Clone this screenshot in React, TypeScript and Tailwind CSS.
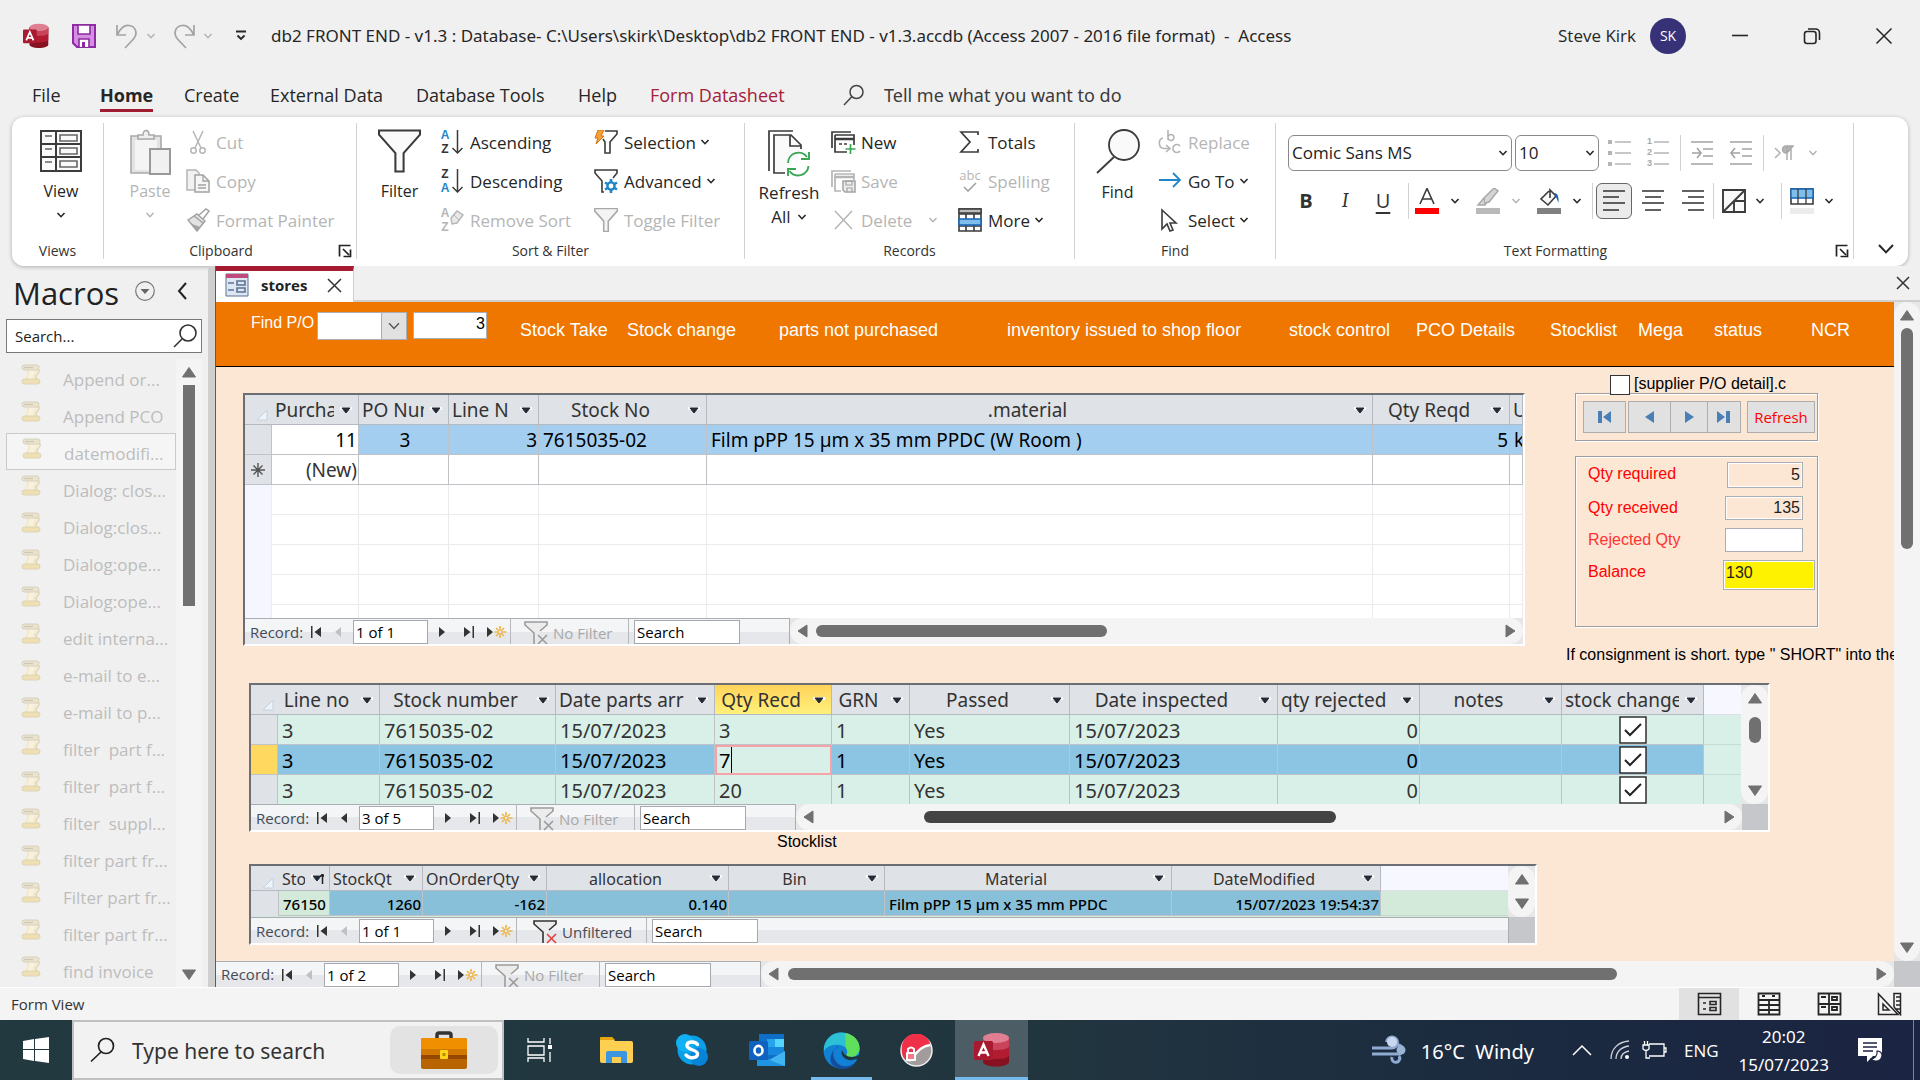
import React from "react";

type Kids = { children?: React.ReactNode };

function Ico({ w = 24, h = 24, vb, children, cls = "" }: Kids & { w?: number; h?: number; vb?: string; cls?: string }) {
  return (
    <svg width={w} height={h} viewBox={vb ?? `0 0 ${w} ${h}`} fill="none" className={`shrink-0 ${cls}`} aria-hidden="true">
      {children}
    </svg>
  );
}

function Chevron({ color = "#262626", w = 10 }: { color?: string; w?: number }) {
  return (
    <Ico w={w} h={w} vb="0 0 10 10">
      <path d="M1.500 3l3.500 3.700L8.500 3" stroke={color} strokeWidth={w > 12 ? 1 : 1.600} />
    </Ico>
  );
}

const DARK = "#3b3b3b";
const PALE = "#b5b5b5";

/* ---------- title bar ---------- */

function AccessLogo({ size = 26 }: { size?: number }) {
  return (
    <Ico w={size} h={size} vb="0 0 36 36">
      <path d="M9 6v24c0 2.600 6 4.500 13 4.500S35 32.600 35 30V6z" fill="#871121" />
      <path d="M9 6v17c0 2.600 6 4 13 4s13-1.400 13-4V6z" fill="#b21c30" />
      <path d="M9 6v8c0 2.600 6 4 13 4s13-1.400 13-4V6z" fill="#c9435a" />
      <ellipse cx="22" cy="6" rx="13" ry="5" fill="#df7f91" />
      <rect x="0" y="9" width="19" height="19" rx="1.500" fill="#a81a30" />
      <path d="M4.500 24L9.500 12.500L14.500 24M6.300 20.500H12.700" stroke="#fff" strokeWidth="2.400" />
    </Ico>
  );
}

function TitleBar() {
  return (
    <header className="flex h-[72px] items-center pl-[23px] text-[17px] text-[#262626]">
      <AccessLogo />
      <button aria-label="Save" className="ml-[22px]">
        <Ico w={26} h={26}>
          <path d="M2 2h22v22H6l-4-4z" fill="#d48fe0" stroke="#8e2aa3" strokeWidth="2" />
          <path d="M7 2h12v9H7z" fill="#fff" stroke="#8e2aa3" strokeWidth="1.600" />
          <path d="M8 24v-8h10v8" fill="#fff" stroke="#8e2aa3" strokeWidth="1.600" />
          <path d="M11 19h3v5h-3z" fill="#8e2aa3" />
        </Ico>
      </button>
      <button aria-label="Undo" className="ml-[18px]">
        <Ico w={24} h={26}>
          <path d="M2 2v10h9M2.500 11.500C6 4 10 2 14 2.500c7 .8 9 8 4.500 13.500L10 25" stroke="#a3a3a3" strokeWidth="1.700" />
        </Ico>
      </button>
      <span className="ml-[7px]"><Chevron color="#b5b5b5" /></span>
      <button aria-label="Redo" className="ml-4">
        <Ico w={24} h={26}>
          <path d="M22 2v10h-9M21.500 11.500C18 4 14 2 10 2.500c-7 .8-9 8-4.500 13.500L14 25" stroke="#a3a3a3" strokeWidth="1.700" />
        </Ico>
      </button>
      <span className="ml-[7px]"><Chevron color="#b5b5b5" /></span>
      <button aria-label="Customize Quick Access Toolbar" className="ml-[22px]">
        <Ico w={12} h={12}>
          <path d="M1 1.500h10M2.500 5.500L6 9l3.500-3.500" stroke="#262626" strokeWidth="1.800" />
        </Ico>
      </button>
      <h1 className="ml-6 font-['Segoe_UI','Noto_Sans',sans-serif] whitespace-pre">{"db2 FRONT END - v1.3 : Database- C:\\Users\\skirk\\Desktop\\db2 FRONT END - v1.3.accdb (Access 2007 - 2016 file format)  -  Access"}</h1>
      <div className="ml-auto flex items-center">
        <span className="text-[17px]">Steve Kirk</span>
        <span className="ml-[14px] flex h-9 w-9 items-center justify-center rounded-full bg-[#373277] text-sm text-white">SK</span>
        <button aria-label="Minimize" className="ml-[45px]">
          <Ico w={18} h={18}><path d="M1 8.500h16" stroke="#262626" strokeWidth="1.600" /></Ico>
        </button>
        <button aria-label="Restore" className="ml-[54px]">
          <Ico w={18} h={18}>
            <rect x="1.500" y="4.500" width="11.500" height="12" rx="2.500" stroke="#262626" strokeWidth="1.600" />
            <path d="M5 2h7.500a4 4 0 0 1 4 4v7" stroke="#262626" strokeWidth="1.600" />
          </Ico>
        </button>
        <button aria-label="Close" className="mr-[27px] ml-[54px]">
          <Ico w={18} h={18}><path d="M1.500 1.500l15 15M16.500 1.500l-15 15" stroke="#262626" strokeWidth="1.500" /></Ico>
        </button>
      </div>
    </header>
  );
}

const menu = [
  ["File", "w-[68px]"],
  ["Home", "w-[84px]"],
  ["Create", "w-[86px]"],
  ["External Data", "w-[146px]"],
  ["Database Tools", "w-[162px]"],
  ["Help", "w-[72px]"],
  ["Form Datasheet", "w-[193px]"],
];

function MenuRow() {
  return (
    <nav className="flex h-[45px] items-center pt-[2px] pl-8 text-lg text-[#262626]">
      {menu.map(([name, w]) => (
        <div key={name} className={`${w} shrink-0`}>
          <button
            className={
              name === "Home"
                ? "border-b-[3px] border-[#a01c30] pt-[3px] leading-[28px] font-bold"
                : name === "Form Datasheet"
                  ? "leading-[30px] text-[#a4203a]"
                  : "leading-[30px]"
            }
          >
            {name}
          </button>
        </div>
      ))}
      <Ico w={22} h={22}>
        <circle cx="13.500" cy="8" r="6.500" stroke="#444" strokeWidth="1.500" />
        <path d="M9 12.500L1 21" stroke="#444" strokeWidth="1.500" />
      </Ico>
      <input
        aria-label="Tell me what you want to do"
        placeholder="Tell me what you want to do"
        className="ml-[19px] w-80 bg-transparent font-['Segoe_UI','Noto_Sans',sans-serif] outline-none placeholder:text-[#3b3b3b]"
      />
    </nav>
  );
}

/* ---------- ribbon ---------- */

function Group({ label, w, launcher, children }: Kids & { label: string; w: string; launcher?: boolean }) {
  return (
    <section aria-label={label} className={`flex shrink-0 flex-col justify-between border-r border-[#d2d2d2] ${w}`}>
      <div className="flex h-[118px]">{children}</div>
      <div className="flex h-4 items-center">
        <span className="grow text-center text-sm leading-4 text-[#333]">{label}</span>
        {launcher && (
          <button aria-label={`${label} options`} className="mr-1">
            <Ico w={14} h={14}>
              <path d="M1.500 12.500V1.500H12.500M5 5l6 6M12.500 5.500v7h-7" stroke="#222" strokeWidth="1.700" />
            </Ico>
          </button>
        )}
      </div>
    </section>
  );
}

function Big({ icon, lines, w, off, drop }: { icon: React.ReactNode; lines: string; w: string; off?: boolean; drop?: boolean }) {
  return (
    <button className={`flex shrink-0 flex-col items-center pt-[6px] text-base ${w} ${off ? "text-[#b5b5b5]" : "text-[#262626]"}`}>
      {icon}
      <span className="mt-[6px] leading-6">{lines}</span>
      {drop && <span className="mt-[7px]"><Chevron color={off ? PALE : "#262626"} /></span>}
    </button>
  );
}

function Small({ icon, text, off, drop, wide }: { icon: React.ReactNode; text: string; off?: boolean; drop?: boolean; wide?: boolean }) {
  return (
    <button className={`flex h-[39px] items-center text-[17px] whitespace-nowrap ${off ? "text-[#b5b5b5]" : "text-[#262626]"}`}>
      <span className="flex w-[30px] shrink-0 items-center">{icon}</span>
      {text}
      {drop && <span className={wide ? "ml-4" : "ml-1"}><Chevron color={off ? PALE : "#262626"} /></span>}
    </button>
  );
}

function AZ({ top, bottom, mono, erase }: { top: string; bottom: string; mono?: boolean; erase?: boolean }) {
  const blue = "#1f86c9";
  const c = (s: string) => (mono ? PALE : s === "A" ? blue : "#333");
  return (
    <span className="flex items-center">
      <span className="flex w-[10px] flex-col items-center font-['Liberation_Sans',sans-serif] text-[12px] leading-[14px] font-bold">
        <span style={{ color: c(top) }}>{top}</span>
        <span style={{ color: c(bottom) }}>{bottom}</span>
      </span>
      {erase ? (
        <Ico w={14} h={24}><path d="M1 10l6-7 6 4-6 8-5 1z" fill="#e8e8e8" stroke={PALE} strokeWidth="1.400" /><path d="M4 7l5 5" stroke={PALE} /></Ico>
      ) : (
        <Ico w={14} h={24}><path d="M7.500 0v23M2.500 18l5 5 5-5" stroke={DARK} strokeWidth="1.500" /></Ico>
      )}
    </span>
  );
}

function Funnel({ w, h, color = DARK, fill = "#fafafa" }: { w: number; h: number; color?: string; fill?: string }) {
  return (
    <Ico w={w} h={h} vb="0 0 42 42">
      <path d="M1 1h40v4L25 23v18h-8V23L1 5z" fill={fill} stroke={color} strokeWidth={w > 30 ? 2 : 2.800} />
    </Ico>
  );
}

function Sep() {
  return <span className="h-9 w-px shrink-0 bg-[#d2d2d2]" />;
}

function Lines({ rows, color = DARK }: { rows: number[][]; color?: string }) {
  return (
    <Ico w={24} h={24}>
      {rows.map(([x, x2, y], i) => <path key={i} d={`M${x} ${y}H${x2}`} stroke={color} strokeWidth="1.600" />)}
    </Ico>
  );
}

function Swatch({ color, children }: Kids & { color: string }) {
  return (
    <Ico w={24} h={26}>
      {children}
      <path d="M0 20h24v6H0z" fill={color} />
    </Ico>
  );
}

function FakeSelect({ label, value, w }: { label: string; value: string; w: string }) {
  return (
    <div className={`flex h-9 shrink-0 items-center rounded-md border border-[#8a8a8a] bg-white pr-[3px] ${w}`}>
      <select aria-label={label} className="w-full grow appearance-none bg-transparent pl-[3px] text-[17px] text-[#222] outline-none">
        <option>{value}</option>
      </select>
      <Chevron />
    </div>
  );
}

function Ribbon() {
  const cutIcon = (
    <Ico w={24} h={24}>
      <path d="M7 1l8 17M17 1L9 18" stroke={PALE} strokeWidth="1.500" />
      <circle cx="7.500" cy="20.500" r="2.700" stroke={PALE} strokeWidth="1.500" />
      <circle cx="16.500" cy="20.500" r="2.700" stroke={PALE} strokeWidth="1.500" />
    </Ico>
  );
  return (
    <div className="mx-3 flex h-[150px] rounded-xl bg-white pt-[6px] pb-[7px] shadow-[0_1px_4px_rgba(0,0,0,0.28)]">
      <Group label="Views" w="w-[92px]">
        <Big
          w="w-[92px] pl-[6px]"
          lines="View"
          drop
          icon={
            <Ico w={44} h={44}>
              <path d="M2 2h40v40H2zM2 15h40M2 28h40M17 2v40" fill="#fafafa" stroke={DARK} strokeWidth="2" />
              <path d="M6 7h7M6 20h7M6 33h7M21 6h17v6H21zM21 19h17v6H21zM21 32h17v6H21z" stroke="#666" strokeWidth="1.600" />
            </Ico>
          }
        />
      </Group>

      <Group label="Clipboard" w="w-[253px]" launcher>
        <Big
          w="w-[82px] pl-[10px]"
          lines="Paste"
          off
          drop
          icon={
            <Ico w={44} h={46} cls="-mb-[2px]">
              <path d="M3 7h30v37H3z" fill="#e3e3e3" stroke="#a9a9a9" strokeWidth="1.600" />
              <path d="M7 11h22v30H7z" fill="#f4f4f4" />
              <path d="M10 10V6h5c0-6 6-6 6 0h5v4z" fill="#eee" stroke="#a9a9a9" strokeWidth="1.600" />
              <path d="M22 20h20v25H22z" fill="#f1f1f1" stroke="#999" strokeWidth="2" />
            </Ico>
          }
        />
        <div>
          <Small off text="Cut" icon={cutIcon} />
          <Small
            off
            text="Copy"
            icon={
              <Ico w={24} h={24}>
                <path d="M1 1h9l3 3v17H1z" fill="#f1f1f1" stroke={PALE} strokeWidth="1.500" />
                <path d="M9 6h8l6 6v11H9z" fill="#f6f6f6" stroke="#a3a3a3" strokeWidth="1.500" />
                <path d="M17 6v6h6M12 16h8M12 19h8" stroke="#a3a3a3" strokeWidth="1.300" />
              </Ico>
            }
          />
          <Small
            off
            text="Format Painter"
            icon={
              <Ico w={24} h={24}>
                <path d="M2 12l9-6 8 7-8 10z" fill="#e3e3e3" stroke="#a3a3a3" strokeWidth="1.500" />
                <path d="M8 8l9 7M13 7l7-6 3 2-6 8" stroke="#a3a3a3" strokeWidth="1.500" />
                <path d="M4 15l10 4-3 4z" fill="#a3a3a3" />
              </Ico>
            }
          />
        </div>
      </Group>

      <Group label="Sort & Filter" w="w-[388px]">
        <Big w="w-[83px] pl-[2px]" lines="Filter" icon={<Funnel w={43} h={44} />} />
        <div className="w-[154px]">
          <Small text="Ascending" icon={<AZ top="A" bottom="Z" />} />
          <Small text="Descending" icon={<AZ top="Z" bottom="A" />} />
          <Small off text="Remove Sort" icon={<AZ top="A" bottom="Z" mono erase />} />
        </div>
        <div>
          <Small
            drop
            text="Selection"
            icon={
              <Ico w={24} h={24}>
                <path d="M11 1h12v3l-7 8v11h-5V12L9 9" stroke={DARK} strokeWidth="1.600" />
                <path d="M4 0h6L7 6h3L2 14l2-6H1z" fill="#f7a13b" stroke="#d9720c" strokeWidth="1" />
              </Ico>
            }
          />
          <Small
            drop
            text="Advanced"
            icon={
              <Ico w={24} h={24}>
                <path d="M10 23H8V12L1 4V1h22v3l-4 5" stroke={DARK} strokeWidth="1.600" />
                <circle cx="17" cy="17" r="3.600" stroke="#1f86c9" strokeWidth="2.400" />
                <path d="M17 10v3M17 21v3M11 13.500l2.500 1.500M20.500 19l2.500 1.500M11 20.500l2.500-1.500M20.500 15l2.500-1.500" stroke="#1f86c9" strokeWidth="2.600" />
              </Ico>
            }
          />
          <Small off text="Toggle Filter" icon={<Funnel w={24} h={24} color="#a9a9a9" fill="#f4f4f4" />} />
        </div>
      </Group>

      <Group label="Records" w="w-[330px]">
        <button className="flex w-[86px] shrink-0 flex-col items-center pt-[6px] pl-[2px] text-[17px] text-[#262626]">
          <Ico w={44} h={48}>
            <path d="M2 42V2h24" stroke={DARK} strokeWidth="1.700" />
            <path d="M18 44H7V6h17l10 10v4" fill="#fafafa" stroke={DARK} strokeWidth="1.700" />
            <path d="M23 6v11h11" stroke={DARK} strokeWidth="1.700" />
            <path d="M21 34a10.500 10.500 0 0 1 19-6M41.500 37a10.500 10.500 0 0 1-19 5M42 23v7h-8M21 47v-7h8" stroke="#3aa655" strokeWidth="1.900" />
          </Ico>
          <span className="mt-1 leading-6">Refresh</span>
          <span className="flex items-center gap-[6px] leading-6">All <Chevron /></span>
        </button>
        <div className="w-[127px]">
          <Small
            text="New"
            icon={
              <Ico w={25} h={24}>
                <path d="M1 18V2h19M4 5h19v10M4 5v17h12" stroke={DARK} strokeWidth="1.700" />
                <path d="M4 9h19" stroke={DARK} strokeWidth="2.500" />
                <path d="M8 14h3M13 14h3" stroke={DARK} strokeWidth="1.400" />
                <path d="M19.500 14v10M14.500 19h10" stroke="#3aa655" strokeWidth="1.700" />
              </Ico>
            }
          />
          <Small
            off
            text="Save"
            icon={
              <Ico w={25} h={24}>
                <path d="M1 18V2h19M4 5h19v6M4 5v17h6" stroke={PALE} strokeWidth="1.700" />
                <path d="M4 8h19" stroke={PALE} strokeWidth="2.500" />
                <path d="M12 12h12v11H14l-2-2z" fill="#ececec" stroke="#a3a3a3" strokeWidth="1.500" />
                <path d="M15 12h6v4h-6zM16 23v-4h5v4" stroke="#a3a3a3" strokeWidth="1.200" />
              </Ico>
            }
          />
          <Small off drop wide text="Delete" icon={<Ico w={24} h={24}><path d="M4 3l17 18M21 3L4 21" stroke={PALE} strokeWidth="1.500" /></Ico>} />
        </div>
        <div>
          <Small text="Totals" icon={<Ico w={24} h={24}><path d="M20 5V2H3l9 10-9 10h17v-3" stroke={DARK} strokeWidth="1.700" /></Ico>} />
          <Small
            off
            text="Spelling"
            icon={
              <span className="flex w-6 flex-col items-center text-[13px] leading-[11px]">
                abc
                <Ico w={14} h={12}><path d="M1 6l4 4 8-8" stroke="#a3a3a3" strokeWidth="1.600" /></Ico>
              </span>
            }
          />
          <Small
            drop
            text="More"
            icon={
              <Ico w={24} h={24}>
                <path d="M1 1h22v22H1zM8 6v17M16 6v17M1 6h22M1 18h22" stroke={DARK} strokeWidth="1.600" />
                <path d="M1 1h22v4H1z" fill="#bbb" stroke={DARK} strokeWidth="1.300" />
                <path d="M1 11h22v6H1z" fill="#7fbdea" stroke="#1565b5" strokeWidth="1.500" />
              </Ico>
            }
          />
        </div>
      </Group>

      <Group label="Find" w="w-[201px]">
        <Big
          w="w-[83px] pl-[2px]"
          lines="Find"
          icon={
            <Ico w={44} h={45}>
              <circle cx="28" cy="16" r="15" fill="#fafafa" stroke={DARK} strokeWidth="1.800" />
              <path d="M18 28L1 44" stroke={DARK} strokeWidth="1.800" />
            </Ico>
          }
        />
        <div>
          <Small
            off
            text="Replace"
            icon={
              <Ico w={24} h={24}>
                <path d="M10 0v10M10 7a3 3 0 1 1 0 1M22 16a4 4 0 1 0 0 5M5 8C0 9 0 18 6 18.500h5M8 15l4 3.500-4 3.500" stroke={PALE} strokeWidth="1.600" />
              </Ico>
            }
          />
          <Small drop text="Go To" icon={<Ico w={24} h={24}><path d="M1 11h21M15 4l7 7-7 7" stroke="#1f86c9" strokeWidth="1.800" /></Ico>} />
          <Small drop text="Select" icon={<Ico w={24} h={24}><path d="M4 2v19l5-5 3 7 3-1-3-7h6z" fill="#fff" stroke={DARK} strokeWidth="1.600" /></Ico>} />
        </div>
      </Group>

      <Group label="Text Formatting" w="w-[578px]" launcher>
        <div className="flex flex-col gap-3 pt-3 pl-3">
          <div className="flex items-center">
            <FakeSelect label="Font" value="Comic Sans MS" w="w-[224px]" />
            <span className="w-[3px]" />
            <FakeSelect label="Font size" value="10" w="w-[84px]" />
            <div className="flex items-center gap-4 px-2">
              <Ico w={24} h={28}><path d="M1 1h4v4H1zM1 12h4v4H1zM1 23h4v4H1z" fill={PALE} /><path d="M8 3h16M8 14h16M8 25h16" stroke={PALE} strokeWidth="1.700" /></Ico>
              <span className="flex items-center">
                <span className="flex flex-col font-['Liberation_Sans',sans-serif] text-[9px] leading-[11px] font-bold text-[#a9a9a9]"><span>1</span><span>2</span><span>3</span></span>
                <Ico w={18} h={28}><path d="M2 3h15M2 14h15M2 25h15" stroke={PALE} strokeWidth="1.700" /></Ico>
              </span>
            </div>
            <span className="w-[2px]" />
            <Sep />
            <div className="flex items-center gap-4 px-[10px]">
              <Ico w={23} h={28}><path d="M0 3h22M12 10h10M12 17h10M0 25h22M1 14h9M6 9l4 5-4 5" stroke="#a3a3a3" strokeWidth="1.600" /></Ico>
              <Ico w={23} h={28}><path d="M0 3h22M12 10h10M12 17h10M0 25h22M1 14h9M5 9l-4 5 4 5" stroke="#a3a3a3" strokeWidth="1.600" /></Ico>
            </div>
            <Sep />
            <span className="mr-[14px] ml-[10px]">
              <Ico w={20} h={20}><path d="M1 5l5 5-5 5" stroke={PALE} strokeWidth="1.600" /><path d="M13 17V3M17 17V3M19 3h-7a3.500 3.500 0 0 0 0 7h1z" fill="#b5b5b5" stroke="#a9a9a9" strokeWidth="1.400" /></Ico>
            </span>
            <Chevron color={PALE} />
          </div>
          <div className="flex items-center text-xl text-[#333]">
            <button aria-label="Bold" className="w-9 text-center font-bold">B</button>
            <button aria-label="Italic" className="w-[42px] text-center font-serif italic">I</button>
            <button aria-label="Underline" className="w-[34px] text-center underline underline-offset-4">U</button>
            <span className="mr-2" />
            <Sep />
            <span className="w-[6px]" />
            <Swatch color="#f00"><path d="M5 16L12 0.500L19 16M7.500 11H16.500" stroke={DARK} strokeWidth="1.600" /></Swatch>
            <span className="mr-4 ml-[11px]"><Chevron /></span>
            <Swatch color="#b9b9b9"><path d="M8 10L18 0l4 3-9 11-4 1zM8 10l-6 7h7l2-3" fill="#d5d5d5" stroke="#a9a9a9" strokeWidth="1.500" /></Swatch>
            <span className="mr-4 ml-[11px]"><Chevron color={PALE} /></span>
            <Swatch color="#808080">
              <path d="M12 3L4 11l7 6 8-9-6-6v8" fill="#fafafa" stroke={DARK} strokeWidth="1.600" />
              <path d="M17 5c4 0 5 4 4.500 10L19 9z" fill="#1565b5" />
            </Swatch>
            <span className="mr-[10px] ml-[11px]"><Chevron /></span>
            <Sep />
            <button aria-label="Align left" className="ml-[3px] flex h-9 w-9 items-center justify-center rounded-md border border-[#666] bg-[#ebebeb]">
              <Lines rows={[[1, 23, 2], [1, 17, 8], [1, 23, 14], [1, 17, 21]]} />
            </button>
            <span className="mr-4 ml-[9px]"><Lines rows={[[1, 23, 2], [4, 20, 8], [1, 23, 14], [4, 20, 21]]} /></span>
            <span className="mr-2"><Lines rows={[[1, 23, 2], [7, 23, 8], [1, 23, 14], [7, 23, 21]]} /></span>
            <Sep />
            <span className="mr-[9px] ml-2">
              <Ico w={24} h={24}><path d="M1 1h22v22H1zM1 23L23 1M12 12v11M12 12h11" fill="#fafafa" stroke={DARK} strokeWidth="1.900" /></Ico>
            </span>
            <Chevron />
            <span className="w-4" />
            <Sep />
            <span className="w-2" />
            <Swatch color="#ececec">
              <path d="M1 1h22v15H1z" fill="#fff" stroke={DARK} strokeWidth="1.600" />
              <path d="M1 1h22v9H1z" fill="#7fbdea" stroke="#1565b5" strokeWidth="1.300" />
              <path d="M8 1v15M16 1v15" stroke={DARK} strokeWidth="1.300" />
            </Swatch>
            <span className="ml-[10px]"><Chevron /></span>
          </div>
        </div>
      </Group>
      <div className="flex grow items-end justify-center pl-[10px]">
        <button aria-label="Collapse ribbon"><Chevron w={20} /></button>
      </div>
    </div>
  );
}

/* ---------- scroll bars ---------- */

function Tri({ dir, color = "#707070", s = 14 }: { dir: "l" | "r" | "u" | "d"; color?: string; s?: number }) {
  const d = { l: "M12 1v12L3 7z", r: "M2 1v12l9-6z", u: "M0.500 12h13L7 2.500z", d: "M0.500 2h13L7 11.500z" }[dir];
  return <Ico w={s} h={s} vb="0 0 14 14"><path d={d} fill={color} stroke={color} strokeLinejoin="round" /></Ico>;
}

function HScroll({ thumb }: { thumb: string }) {
  return (
    <div className="flex h-[26px] min-w-0 grow items-center bg-[#e6e6e6]">
      <div className="flex h-full grow items-center rounded-[13px] bg-[#f4f4f4] pr-[5px] pl-[5px]">
        <Tri dir="l" />
        <span className={`h-3 shrink-0 rounded-full ${thumb}`} />
        <span className="grow" />
        <Tri dir="r" />
      </div>
    </div>
  );
}

/* ---------- navigation pane ---------- */

const macros = [
  "Append or...", "Append PCO", "datemodifi...", "Dialog: clos...", "Dialog:clos...", "Dialog:ope...", "Dialog:ope...",
  "edit interna...", "e-mail to e...", "e-mail to p...", "filter  part f...", "filter  part f...", "filter  suppl...",
  "filter part fr...", "Filter part fr...", "filter part fr...", "find invoice",
];

function ScrollIcon() {
  return (
    <Ico w={20} h={22} cls="mr-[22px] -mt-2">
      <path d="M5 3h12l-3 8 2 7H3l3-8z" fill="#f3e8c9" />
      <path d="M8 6h7l-3 6 1 5H5l3-7z" fill="#f8f1dc" />
      <rect x="1" y="1" width="17" height="5" rx="2.500" fill="#ebe3cb" stroke="#d6d0c0" />
      <path d="M15 6h3v2l-3 4 1 4" stroke="#e3d7b4" strokeWidth="1.600" />
      <rect x="1" y="15" width="18" height="5" rx="2.500" fill="#efe0b4" stroke="#dcd2b6" />
      <path d="M3 3.500h9" stroke="#cdc8bc" strokeWidth="1.300" />
    </Ico>
  );
}

function NavPane() {
  return (
    <aside className="flex w-[208px] shrink-0 flex-col">
      <div className="flex h-[53px] items-center pl-[13px]">
        <h2 className="w-[122px] text-[31px] leading-[48px] text-[#222]">Macros</h2>
        <button aria-label="Choose category" className="-mt-1">
          <Ico w={20} h={20}><circle cx="10" cy="10" r="9.300" stroke="#777" strokeWidth="1.200" /><path d="M5.500 8h9L10 13z" fill="#666" /></Ico>
        </button>
        <button aria-label="Collapse pane" className="-mt-1 ml-5">
          <Ico w={14} h={18}><path d="M11 1L4 9l7 8" stroke="#222" strokeWidth="2" /></Ico>
        </button>
      </div>
      <label className="mr-[6px] ml-[6px] flex h-[34px] items-center border border-[#777] bg-white pr-1 pl-2">
        <input aria-label="Search" placeholder="Search..." className="w-0 grow text-[15px] outline-none placeholder:text-[#222]" />
        <Ico w={24} h={24}><circle cx="15" cy="9" r="8" stroke="#333" strokeWidth="1.600" /><path d="M9 15l-8 8" stroke="#333" strokeWidth="1.600" /></Ico>
      </label>
      <div className="mt-[6px] mr-[6px] ml-[6px] flex min-h-0 grow">
        <ul className="h-full w-[170px] overflow-hidden">
          {macros.map((m, i) => (
            <li key={i} className={`flex h-[37px] items-center pt-[3px] pl-[15px] text-[17px] whitespace-pre text-[#bdbdbd] ${i === 2 ? "border border-[#cacaca] bg-[#f5f5f5] pl-[14px]" : ""}`}>
              <ScrollIcon />
              {m}
            </li>
          ))}
        </ul>
        <div className="flex w-[26px] flex-col items-center bg-[#f4f4f4] pt-[6px] pb-[5px]">
          <Tri dir="u" />
          <span className="mt-[6px] h-[221px] w-3 bg-[#707070]" />
          <span className="grow" />
          <Tri dir="d" />
        </div>
      </div>
    </aside>
  );
}

/* ---------- record navigator ---------- */

function RecordNav({ pos, first, filter = "No Filter", end = "w-[50px] border-r" }: { pos: string; first?: boolean; filter?: string; end?: string }) {
  const on = filter === "Unfiltered";
  return (
    <div className={`flex h-[26px] items-center border-t border-[#a9adb4] bg-[linear-gradient(#f4f5f7_50%,#e6e7eb_50%)] text-[15px] text-[#444b55] ${end === "grow" ? "grow" : "shrink-0"}`}>
      <span className="w-[60px] pl-[5px]">Record:</span>
      <button aria-label="First record" className="flex w-[22px] justify-center">
        <Ico w={12} h={12}><path d="M1 0h1.500v12H1zM11 1v10L4.500 6z" fill="#333" /></Ico>
      </button>
      <button aria-label="Previous record" className="flex w-[22px] justify-center">
        <Ico w={8} h={12}><path d="M7 1v10L1 6z" fill={first ? "#bfc1c5" : "#333"} /></Ico>
      </button>
      <input aria-label="Current record" defaultValue={pos} className="ml-1 h-6 w-[75px] border border-[#a5a8ad] bg-white pl-[2px] text-black outline-none" />
      <button aria-label="Next record" className="flex w-[27px] justify-center">
        <Ico w={8} h={12}><path d="M1 1v10l6-5z" fill="#333" /></Ico>
      </button>
      <button aria-label="Last record" className="flex w-[27px] justify-center">
        <Ico w={12} h={12}><path d="M9.500 0H11v12H9.500zM1 1v10l6.500-5z" fill="#333" /></Ico>
      </button>
      <button aria-label="New record" className="flex w-7 justify-center">
        <Ico w={21} h={14}>
          <path d="M1 2v10l6-5z" fill="#333" />
          <path d="M14 1v3M14 10v3M8.500 7h3M17 7h3.500M10 3l2 2M18 3l-2 2M10 11l2-2M18 11l-2-2" stroke="#eeb64f" strokeWidth="1.700" />
          <circle cx="14" cy="7" r="2" stroke="#eeb64f" strokeWidth="1.400" />
        </Ico>
      </button>
      <button className={`flex h-full items-center gap-1 border-x border-[#b5b8bd] ${on ? "w-[131px] pl-4 text-[#444b55]" : "w-[119px] pl-[13px] text-[#a9a9a9]"}`}>
        <Ico w={25} h={24} cls="-mb-[3px]">
          <path d="M10 23V12L1 4V1h22v3l-7 6" fill="#ececec" stroke={on ? "#333" : "#9b9b9b"} strokeWidth="1.600" />
          <path d="M14 14l9 9M23 14l-9 9" stroke={on ? "#e04040" : "#9b9b9b"} strokeWidth="1.600" />
        </Ico>
        <span className="pt-[2px]">{filter}</span>
      </button>
      <input aria-label="Search records" placeholder="Search" className="ml-[5px] h-6 w-[106px] border border-[#a5a8ad] bg-white pl-[2px] outline-none placeholder:text-black" />
      <span className={`h-full border-[#a9adb4] ${end}`} />
    </div>
  );
}

/* ---------- datasheets ---------- */

type Col = { t: string; w: string; clip?: boolean; hot?: boolean; sort?: boolean; bare?: boolean };

function Head({ cols, small, tail }: { cols: Col[]; small?: boolean; tail?: boolean }) {
  return (
    <thead>
      <tr className={small ? "h-[25px]" : "h-[30px]"}>
        <th aria-label="Select all" className="border-b border-[#b5bac2] bg-[#dfe2e7] p-0 align-bottom">
          <Ico w={24} h={small ? 16 : 18}><path d="M12 14L22 4v10z" fill="#eef3fa" stroke="#c2d2e4" /></Ico>
        </th>
        {cols.map((c, i) => (
          <th
            key={i}
            scope="col"
            className={`border-r border-b border-[#b5bac2] p-0 font-normal text-[#333] ${c.hot ? "bg-[linear-gradient(#ffd35a,#fff07c)]" : "bg-[#dfe2e7]"}`}
          >
            <div className={`flex items-center pt-[2px] ${small ? "h-6 text-base" : "h-[29px] text-[19px]"}`}>
              <span className={`min-w-0 grow overflow-hidden whitespace-nowrap ${c.clip ? "pl-[3px] text-left" : "text-center"}`}>{c.t}</span>
              {!c.bare && (
                <span className="flex w-6 shrink-0 justify-center">
                  <Ico w={13} h={10}>
                    <path d="M0 1h12v3H0z" fill="#fff" />
                    <path d="M2 2h8L6 7z" fill="#222a35" stroke="#222a35" />
                    {c.sort && <path d="M11.500 10V0M9.500 2.500L11.500 0L13 2.500" stroke="#222" strokeWidth="1.500" />}
                  </Ico>
                </span>
              )}
            </div>
          </th>
        ))}
        {tail && <td className="border-b border-[#dcdfe8] bg-[#f7f7ff]" />}
      </tr>
    </thead>
  );
}

function Cols({ sel, cols, tail }: { sel: string; cols: Col[]; tail?: boolean }) {
  return (
    <colgroup>
      <col className={sel} />
      {cols.map((c, i) => <col key={i} className={c.w} />)}
      {tail && <col />}
    </colgroup>
  );
}

const frame = "border-2 border-t-[#6b6e73] border-r-white border-b-white border-l-[#6b6e73]";
const cell = "overflow-hidden border-r border-b border-[#bfc3c8] pt-[2px] pr-px pb-0 pl-1 whitespace-nowrap";
const comic = "font-['Comic_Sans_MS','Noto_Sans',sans-serif]";

const poCols: Col[] = [
  { t: "Purcha", w: "w-[87px]", clip: true },
  { t: "PO Num", w: "w-[90px]", clip: true },
  { t: "Line N", w: "w-[90px]", clip: true },
  { t: "Stock No", w: "w-[168px]" },
  { t: ".material", w: "w-[666px]" },
  { t: "Qty Reqd", w: "w-[137px]" },
  { t: "U", w: "w-[13px]", clip: true, bare: true },
];

function PurchaseSheet() {
  const row = ["11", "3", "3", "7615035-02", "Film pPP 15 µm x 35 mm PPDC (W Room )", "5", "k"];
  const align = ["text-right", "text-center", "text-right", "text-left", "text-left", "text-right", "text-left"];
  return (
    <div className={`flex h-[253px] w-[1282px] shrink-0 flex-col overflow-hidden bg-white ${frame}`}>
      <div className="min-h-0 grow overflow-hidden">
        <table className={`w-full table-fixed border-separate border-spacing-0 text-[19px] leading-[27px] ${comic}`}>
          <Cols sel="w-[27px]" cols={poCols} />
          <Head cols={poCols} />
          <tbody>
            <tr className="h-[30px] text-black">
              <td className="border-r border-b border-[#bfc3c8] bg-[#dfe2e7]" />
              {row.map((v, i) => <td key={i} className={`${cell} ${align[i]} ${i ? "bg-[#a4cef0]" : "bg-white"}`}>{v}</td>)}
            </tr>
            <tr className="h-[30px] text-[#333]">
              <td className="border-r border-b border-[#bfc3c8] bg-[#dfe2e7] p-0">
                <Ico w={16} h={16} cls="mx-auto"><path d="M8 1v14M1 8h14M3.500 3.500l9 9M12.500 3.500l-9 9" stroke="#555" strokeWidth="1.400" /></Ico>
              </td>
              {row.map((_, i) => <td key={i} className={`${cell} text-right`}>{i === 0 ? "(New)" : ""}</td>)}
            </tr>
            {[0, 1, 2, 3, 4].map((r) => (
              <tr key={r} className="h-[30px]">
                <td className="border-r border-[#ececf4] bg-[#f5f6ff]" />
                {row.map((_, i) => <td key={i} className="border-r border-b border-[#ebebeb]" />)}
              </tr>
            ))}
          </tbody>
        </table>
      </div>
      <div className="flex shrink-0">
        <RecordNav pos="1 of 1" first />
        <HScroll thumb="ml-[7px] w-[291px] bg-[#707070]" />
      </div>
    </div>
  );
}

const recCols: Col[] = [
  { t: "Line no", w: "w-[102px]" },
  { t: "Stock number", w: "w-[176px]" },
  { t: "Date parts arr", w: "w-[159px]", clip: true },
  { t: "Qty Recd", w: "w-[117px]", hot: true },
  { t: "GRN", w: "w-[78px]" },
  { t: "Passed", w: "w-[160px]" },
  { t: "Date inspected", w: "w-[208px]" },
  { t: "qty rejected", w: "w-[142px]", clip: true },
  { t: "notes", w: "w-[142px]" },
  { t: "stock change", w: "w-[142px]", clip: true },
];

function ReceiptSheet() {
  const qty = ["3", "7", "20"];
  return (
    <div className={`flex w-[1521px] flex-col ${frame}`}>
      <div className="flex h-[119px]">
        <div className="min-w-0 grow overflow-hidden">
          <table className={`w-full table-fixed border-separate border-spacing-0 text-[20px] leading-[27px] ${comic}`}>
            <Cols sel="w-[27px]" cols={recCols} tail />
            <Head cols={recCols} tail />
            <tbody>
              {qty.map((q, r) => {
                const hot = r === 1;
                const vals = ["3", "7615035-02", "15/07/2023", q, "1", "Yes", "15/07/2023", "0", ""];
                return (
                  <tr key={r} className={`h-[30px] ${hot ? "bg-[#8cc5e3] text-black" : "bg-[#d9f0e8] text-[#333]"}`}>
                    <td className={`border-r border-b border-[#bfc3c8] ${hot ? "bg-[#ffd95f]" : "bg-[#dfe2e7]"}`} />
                    {vals.map((v, i) =>
                      hot && i === 3 ? (
                        <td key={i} className="border-2 border-[#f4a3a8] bg-[#d9f0e8] p-0 pl-[2px]">
                          <div className="flex h-[26px] items-center">
                            <input aria-label="Qty Recd" defaultValue={v} className="w-3 bg-transparent outline-none" />
                            <span className="h-[26px] w-px bg-black" />
                          </div>
                        </td>
                      ) : (
                        <td key={i} className={`${cell} ${i === 7 ? "text-right" : ""}`}>{v}</td>
                      ),
                    )}
                    <td className="border-r border-b border-[#bfc3c8] p-0">
                      <input type="checkbox" defaultChecked aria-label="stock change" className="sr-only" />
                      <Ico w={28} h={28} cls="mx-auto">
                        <rect x="1" y="1" width="26" height="26" fill="#fff" stroke="#222" strokeWidth="1.400" />
                        <path d="M6 14l5 5L22 8" stroke="#222" strokeWidth="2" />
                      </Ico>
                    </td>
                    <td className={`border-b border-[#c5dcd5] ${hot ? "bg-[#d9f0e8]" : ""}`} />
                  </tr>
                );
              })}
            </tbody>
          </table>
        </div>
        <div className="w-[27px] shrink-0 bg-[#e6e6e6]">
          <div className="flex h-full flex-col items-center rounded-[13px] bg-[#f4f4f4] py-[6px]">
            <Tri dir="u" />
            <span className="mt-3 h-[26px] w-3 rounded-full bg-[#707070]" />
            <span className="grow" />
            <Tri dir="d" />
          </div>
        </div>
      </div>
      <div className="flex">
        <RecordNav pos="3 of 5" />
        <HScroll thumb="ml-[109px] w-[412px] bg-[#444]" />
        <span className="w-[26px] bg-[#c6c7cb]" />
      </div>
    </div>
  );
}

const stockCols: Col[] = [
  { t: "Sto", w: "w-[51px]", clip: true, sort: true },
  { t: "StockQt", w: "w-[93px]", clip: true },
  { t: "OnOrderQty", w: "w-[124px]", clip: true },
  { t: "allocation", w: "w-[182px]" },
  { t: "Bin", w: "w-[156px]" },
  { t: "Material", w: "w-[287px]" },
  { t: "DateModified", w: "w-[209px]" },
];

function StockSheet() {
  const vals = ["76150", "1260", "-162", "0.140", "", "Film pPP 15 µm x 35 mm PPDC", "15/07/2023 19:54:37"];
  return (
    <div className={`flex w-[1288px] flex-col ${frame}`}>
      <div className="flex h-[51px] bg-[#d3e9da]">
        <div className="min-w-0 grow overflow-hidden">
          <table className={`w-full table-fixed border-separate border-spacing-0 text-[15px] leading-[22px] ${comic}`}>
            <Cols sel="w-[28px]" cols={stockCols} tail />
            <Head cols={stockCols} small tail />
            <tbody>
              <tr className="h-[25px] bg-[#89c0d9] font-medium text-black">
                <td className="border-r border-[#bfc3c8] bg-[#dfe2e7]" />
                {vals.map((v, i) => (
                  <td key={i} className={`${cell} ${i === 0 ? "bg-[#d3e9da]" : ""} ${[1, 2, 3, 6].includes(i) ? "text-right" : ""}`}>{v}</td>
                ))}
                <td className="border-b border-[#c3d9ca] bg-[#d3e9da]" />
              </tr>
            </tbody>
          </table>
        </div>
        <div className="w-[27px] shrink-0 bg-[#e6e6e6]">
          <div className="flex h-full flex-col items-center justify-between rounded-[13px] bg-[#f4f4f4] py-[6px]">
            <Tri dir="u" />
            <Tri dir="d" />
          </div>
        </div>
      </div>
      <div className="flex">
        <RecordNav pos="1 of 1" first filter="Unfiltered" end="grow" />
        <span className="w-[27px] border-l border-[#a9adb4] bg-[#c6c7cb]" />
      </div>
    </div>
  );
}

/* ---------- right-hand form panel ---------- */

const etched = "border border-[#9d9d9d] shadow-[inset_1px_1px_0_#fff,1px_1px_0_#fff]";
const navBtn = "flex h-8 items-center justify-center border border-[#adadad] bg-[#e1e1e1]";

function Field({ label, value, w, bold, tint, left }: { label: string; value: string; w: string; bold?: boolean; tint: string; left?: boolean }) {
  return (
    <label className="flex items-start justify-between text-base leading-6">
      <span className={bold ? "text-[#f00]" : "text-[#f33]"}>{label}</span>
      <input
        aria-label={label}
        defaultValue={value}
        className={`border border-[#a9adb4] px-[2px] text-[#222] shadow-[inset_0_0_0_1px_#fff] outline-none ${w} ${tint} ${left ? "pb-1" : "text-right"}`}
      />
    </label>
  );
}

function SidePanel() {
  const b = "#4a7fb5";
  return (
    <div className="ml-[41px] min-w-0 grow pt-2 font-['Liberation_Sans',sans-serif] text-[16px] text-black">
      <label className="relative z-10 -mb-[2px] ml-11 flex h-5 items-center">
        <input type="checkbox" className="h-5 w-5 appearance-none border border-[#333] bg-white" />
        <span className="-mt-[3px] ml-1 whitespace-nowrap">[supplier P/O detail].c</span>
      </label>
      <div className={`ml-[9px] flex h-12 w-[243px] items-start pt-[7px] pl-[7px] ${etched}`}>
        <button aria-label="First" className={`w-[43px] ${navBtn}`}><Ico w={14} h={14}><path d="M0 1h4v12H0zM13 1v12L5 7z" fill={b} /></Ico></button>
        <button aria-label="Previous" className={`ml-[2px] w-[43px] ${navBtn}`}><Ico w={14} h={14}><path d="M11 1v12L2 7z" fill={b} /></Ico></button>
        <button aria-label="Next" className={`-ml-px w-[38px] ${navBtn}`}><Ico w={14} h={14}><path d="M3 1v12l9-6z" fill={b} /></Ico></button>
        <button aria-label="Last" className={`-ml-px w-[34px] ${navBtn}`}><Ico w={14} h={14}><path d="M9 1h4v12H9zM0 1v12l8-6z" fill={b} /></Ico></button>
        <button className={`ml-[6px] w-[68px] font-['Open_Sans',sans-serif] text-[15px] text-[#f00] ${navBtn}`}>Refresh</button>
      </div>
      <div className={`mt-[15px] ml-[9px] flex h-[171px] w-[243px] flex-col gap-2 pt-[5px] pr-[14px] pl-3 ${etched}`}>
        <Field label="Qty required" value="5" w="h-[26px] w-[76px]" bold tint="bg-[#fce6d4]" />
        <Field label="Qty received" value="135" w="h-[24px] w-[78px]" bold tint="bg-[#fce6d4]" />
        <Field label="Rejected Qty" value="" w="h-[24px] w-[78px]" tint="bg-white" />
        <Field label="Balance" value="130" w="h-[30px] w-[92px] -mr-3" bold tint="bg-[#fff200]" left />
      </div>
      <p className="mt-[18px] leading-5 whitespace-nowrap">If consignment is short. type " SHORT" into the</p>
    </div>
  );
}

/* ---------- form ---------- */

const links = ["Stock Take", "Stock change", "parts not purchased", "inventory issued to shop floor", "stock control", "PCO Details", "Stocklist", "Mega", "status", "NCR"];

function FormHeader() {
  return (
    <div className="flex h-[65px] items-start border-b border-black bg-[#ef7700] pt-[10px] pl-[35px] font-['Liberation_Sans',sans-serif] text-base text-white">
      <label className="flex items-start">
        <span className="w-[66px] leading-[22px] whitespace-nowrap">Find P/O</span>
        <span className="flex h-7 w-[90px] border border-[#a9adb4] bg-white">
          <select aria-label="Find P/O" className="w-0 grow appearance-none bg-white text-black outline-none"><option></option></select>
          <span className="flex w-[25px] items-center justify-center border-l border-[#a9adb4] bg-[#e1e1e1]"><Chevron color="#555" w={14} /></span>
        </span>
      </label>
      <input aria-label="P/O number" defaultValue="3" className="ml-[6px] h-[27px] w-[74px] border border-[#a9adb4] bg-white pr-px pb-1 text-right text-black outline-none" />
      <div className="mt-[6px] ml-[33px] grid grid-cols-[107px_152px_228px_282px_127px_134px_88px_76px_97px_auto] text-[18px] leading-6 whitespace-nowrap">
        {links.map((l) => <a key={l} href="#">{l}</a>)}
      </div>
    </div>
  );
}

function FormArea() {
  return (
    <main className="flex min-w-0 grow flex-col border-l border-[#5c5c5c] bg-[#f0f0f0]">
      <div className="flex h-9 shrink-0 items-stretch border-b-2 border-[#cfcfcf]">
        <div className="-mb-[2px] flex w-[138px] items-center border-t-[5px] border-r border-t-[#a51c30] border-r-[#cfcfcf] bg-white pb-[3px] pl-[9px]">
          <Ico w={24} h={24}>
            <path d="M1 1h22v22H1z" fill="#dfe6f3" stroke="#5b7394" />
            <path d="M1 1h22v4H1z" fill="#c04a7c" />
            <path d="M3 10h6M3 17h6M12 8h8v4h-8zM12 15h8v4h-8z" stroke="#5b7394" strokeWidth="1.600" />
          </Ico>
          <span className="ml-3 text-[15px] font-bold text-[#222]">stores</span>
          <button aria-label="Close stores" className="ml-5">
            <Ico w={15} h={15}><path d="M1 1l13 13M14 1L1 14" stroke="#333" strokeWidth="1.500" /></Ico>
          </button>
        </div>
        <button aria-label="Close object" className="mr-[10px] ml-auto">
          <Ico w={14} h={14}><path d="M1 1l12 12M13 1L1 13" stroke="#333" strokeWidth="1.500" /></Ico>
        </button>
      </div>
      <div className="flex min-h-0 grow">
        <div className="flex min-w-0 grow flex-col">
          <FormHeader />
          <div className="min-h-0 grow overflow-hidden bg-[#fce6d4]">
            <div className="flex">
              <div className="pt-[26px] pl-[27px]"><PurchaseSheet /></div>
              <SidePanel />
            </div>
            <div className="pt-[18px] pl-[33px]">
              <ReceiptSheet />
              <p className="h-8 pl-[528px] font-['Liberation_Sans',sans-serif] text-[16px] leading-[20px] text-black">Stocklist</p>
              <StockSheet />
            </div>
          </div>
          <div className="flex shrink-0">
            <RecordNav pos="1 of 2" first />
            <HScroll thumb="ml-[8px] w-[829px] bg-[#707070]" />
          </div>
        </div>
        <div className="flex w-[26px] shrink-0 flex-col bg-[#e6e6e6]">
          <div className="flex grow flex-col items-center rounded-[13px] bg-[#f4f4f4] pt-[6px] pb-[6px]">
            <Tri dir="u" />
            <span className="mt-[6px] h-[221px] w-3 rounded-full bg-[#707070]" />
            <span className="grow" />
            <Tri dir="d" />
          </div>
          <span className="h-[26px] bg-[#c6c7cb]" />
        </div>
      </div>
    </main>
  );
}

/* ---------- status bar and taskbar ---------- */

function StatusBar() {
  const s = { stroke: "#262626", strokeWidth: 1.800 };
  return (
    <div className="flex h-[33px] shrink-0 items-center border-t border-white bg-[#f4f4f4] pl-[11px] text-[15px] text-[#333]">
      <span>Form View</span>
      <div className="ml-auto flex h-full">
        <button aria-label="Form View" className="flex w-[60px] items-center justify-center bg-[#e1e1e1]">
          <Ico w={25} h={24}><path d="M1.500 1.500h22v21h-22zM1.500 5.500h22M6 11h3M6 17h3M13 9.500h6v3h-6zM13 15.500h6v3h-6z" {...s} strokeWidth={1.600} /></Ico>
        </button>
        <button aria-label="Datasheet View" className="flex w-[60px] items-center justify-center">
          <Ico w={24} h={24}><path d="M1.500 1.500h21v21h-21zM1.500 8h21M1.500 13h21M1.500 18h21M12 8v14M5 4h3M15 4h3" {...s} /></Ico>
        </button>
        <button aria-label="Layout View" className="flex w-[60px] items-center justify-center">
          <Ico w={25} h={24}><path d="M1.500 1.500h22v21h-22zM12 1.500v21M1.500 12h22M4 5h5M4 15h5M15 5h5v3h-5zM15 15h5v3h-5z" {...s} /></Ico>
        </button>
        <button aria-label="Design View" className="flex w-[61px] items-center justify-center">
          <Ico w={25} h={24}><path d="M1.500 2v20.500H21zM6 12v6h6zM17 15V1.500h6.500v21L17 15M19 5h4M19 9h4M19 13h4M19 17h4" {...s} strokeWidth={1.500} /></Ico>
        </button>
      </div>
    </div>
  );
}

function Taskbar() {
  return (
    <footer className="flex h-[60px] shrink-0 items-center bg-[linear-gradient(90deg,#22393f_0%,#21353f_55%,#1b2a40_80%,#1b2442_100%)] text-white">
      <button aria-label="Start" className="flex w-[72px] justify-center">
        <Ico w={26} h={26}><path d="M0 4l11-2v10H0zM12 2l14-2v12H12zM0 13h11v11L0 22zM12 13h14v13l-14-2z" fill="#fff" /></Ico>
      </button>
      <label className="flex h-[60px] w-[432px] items-center border-2 border-[#bfc1c1] bg-[#f2f2f2] pr-1 pl-4">
        <Ico w={26} h={26}><circle cx="16" cy="9" r="7.500" stroke="#222" strokeWidth="1.700" /><path d="M11 15L1 24.500" stroke="#222" strokeWidth="1.700" /></Ico>
        <input aria-label="Type here to search" placeholder="Type here to search" className="ml-4 w-0 grow pt-[3px] font-['Segoe_UI','Noto_Sans',sans-serif] text-[21px] outline-none placeholder:text-[#333]" />
        <span className="flex h-12 w-[108px] items-center justify-center rounded-[10px] bg-[#e3e3e3]">
          <Ico w={46} h={38}>
            <path d="M16 8V4q0-2 2-2h10q2 0 2 2v4" stroke="#333" strokeWidth="3.500" />
            <rect x="0" y="7" width="46" height="31" rx="2" fill="#b86400" />
            <path d="M2 7h42l2 2v15H0V9z" fill="#f09000" />
            <path d="M0 18h46v6H0z" fill="#d07800" />
            <path d="M0 24h46v4H0z" fill="#974800" />
            <rect x="19" y="19" width="8" height="9" rx="1" fill="#ffd51c" />
            <path d="M21.500 22h3v3h-3z" fill="#b88a00" />
          </Ico>
        </span>
      </label>
      <div className="flex h-full items-center">
        <button aria-label="Task View" className="flex w-[72px] justify-center">
          <Ico w={26} h={24}>
            <path d="M1 0v4h16V0M1 8h16v9H1zM1 24v-4h16v4M23 0v6M23 14v10" stroke="#fff" strokeWidth="1.300" />
            <path d="M21 7h4v4h-4z" fill="#fff" />
          </Ico>
        </button>
        <button aria-label="File Explorer" className="flex w-20 justify-center">
          <Ico w={33} h={28}>
            <path d="M0 3q0-2 2-2h10l3 4h16q2 0 2 2v18q0 2-2 2H2q-2 0-2-2z" fill="#ffcf52" />
            <path d="M0 2q0-1 2-1h10l3 3H0z" fill="#e5a50c" />
            <path d="M6 27V17q0-2 2-2h17q2 0 2 2v10h-6v-6h-9v6z" fill="#3d94df" />
          </Ico>
        </button>
        <button aria-label="Skype" className="flex w-[72px] justify-center">
          <Ico w={34} h={34}>
            <circle cx="17" cy="17" r="14.500" fill="#0a9fe6" />
            <circle cx="10" cy="10" r="9" fill="#12b0f4" />
            <circle cx="24" cy="24" r="9" fill="#0783d8" />
            <path d="M22.500 11.500C20 8 12 8 12 12.500c0 5 10.500 3.500 10.500 8.500 0 4.500-8.500 5-11.500 1" stroke="#fff" strokeWidth="3.400" strokeLinecap="round" />
          </Ico>
        </button>
        <button aria-label="Outlook" className="flex w-[78px] justify-center">
          <Ico w={36} h={34}>
            <path d="M10 1h25v31H10z" fill="#0f6fc6" />
            <path d="M18 6h8v8h-8z" fill="#28a3ea" /><path d="M26 6h9v8h-9z" fill="#55d5fd" /><path d="M18 14h17v8H18z" fill="#1687dc" />
            <path d="M8 18l14 10 14-10v15H8z" fill="#1f94e3" /><path d="M36 18v15L20 27z" fill="#40b5f0" />
            <rect x="0" y="8" width="19" height="19" rx="1.500" fill="#0f62c0" />
            <ellipse cx="9.500" cy="17.500" rx="4" ry="4.600" stroke="#fff" strokeWidth="2.600" />
          </Ico>
        </button>
        <button aria-label="Edge" className="mx-[5px] flex h-full w-[61px] items-center justify-center border-b-[3px] border-[#76b9ed] pt-[3px]">
          <Ico w={37} h={37}>
            <circle cx="18.500" cy="18.500" r="18" fill="#1180d5" />
            <path d="M1 15C3 5 11 0 19 .5c10 .5 18 8 17.500 16.500C36 23 31 25.500 26 25c-3-.5-3-1.500-2-3.500 1-3-1-7.500-7-8.500C10 12 4 14 1 19z" fill="#2cc0d4" />
            <path d="M22 1c9 1.500 15 8 14.500 16C36 23 31 25.500 26 25c-3-.5-3-1.500-2-3.500 1-2 0-4-1-5.500z" fill="#5fdf5c" />
            <path d="M16 14c-6 2-7 9-4 14 4 7 14 9 21 2-3 5-9 7.500-14 7C9 36 4 29 10 19z" fill="#134e9e" />
            <path d="M33 27c-5 2.500-13 1-14.500-6 0-1 0-2 .5-3 2 5 6 8 14 6.500l4-2-1 6z" fill="#21353f" />
          </Ico>
        </button>
        <button aria-label="Remote client" className="flex w-[78px] justify-center">
          <Ico w={33} h={33}>
            <circle cx="16.500" cy="16.500" r="15.500" fill="#a39c9c" stroke="#eee" strokeWidth="1.500" />
            <path d="M2 17a14.500 14.500 0 0 1 28.500-6C20 11 16 19 8 27 4 25 2 22 2 17z" fill="#f03048" />
            <path d="M30.500 11C20 12 17 19 9 27" stroke="#fff" strokeWidth="2.500" />
            <rect x="6" y="18" width="10" height="9" rx="1" fill="#fff" /><path d="M8 18v-3q3-3 6 0v3" stroke="#fff" strokeWidth="2" />
            <path d="M8 20h6v5H8z" fill="#f8788a" />
          </Ico>
        </button>
        <button aria-label="Access" className="flex h-full w-[73px] items-center justify-center border-b-[3px] border-[#76b9ed] bg-[#4c5d66] pt-[3px]">
          <AccessLogo size={36} />
        </button>
      </div>
      <div className="ml-auto flex h-full items-center">
        <Ico w={36} h={30}>
          <path d="M1 13h20a5.500 5.500 0 1 0-5.500-6M1 19h26a4.500 4.500 0 1 0-4-6M21 22a4 4 0 1 0 7-1" stroke="#8fabd4" strokeWidth="3" />
          <circle cx="21" cy="7" r="5" fill="#c9d8ee" /><circle cx="30" cy="15" r="4.500" fill="#9ab4d6" />
        </Ico>
        <span className="ml-[14px] pt-[3px] font-['Segoe_UI','Noto_Sans',sans-serif] text-[20px] whitespace-pre">16°C  Windy</span>
        <span className="ml-[38px]"><Ico w={20} h={12}><path d="M1 11l9-9 9 9" stroke="#fff" strokeWidth="1.500" /></Ico></span>
        <span className="ml-[18px]">
          <Ico w={20} h={20}>
            <path d="M1 19C1 9 8 2 19 1M6 19c0-7 5-12 13-13M11 19c0-4 3-7 8-8" stroke="#cfd4da" strokeWidth="1.300" />
            <circle cx="17" cy="17" r="2" fill="#fff" />
          </Ico>
        </span>
        <span className="ml-3">
          <Ico w={26} h={20}><path d="M7 4h15v12H7M22 8h2v4h-2M1 5h6v4q-3 3-6 0zM2.500 5V1M5.500 5V1M4 10v8h4" stroke="#fff" strokeWidth="1.300" /></Ico>
        </span>
        <span className="ml-4 pt-px text-[17px]">ENG</span>
        <div className="ml-5 flex flex-col items-center pt-[2px] font-['Segoe_UI','Noto_Sans',sans-serif] text-[17px] leading-[28px]"><span>20:02</span><span>15/07/2023</span></div>
        <button aria-label="Notifications" className="mr-[30px] ml-7">
          <Ico w={26} h={26}>
            <path d="M1 1h24v18h-9l-6 6v-6H1z" fill="#fff" />
            <path d="M6 6h14M6 10h14M6 14h10" stroke="#1b2442" strokeWidth="1.300" />
            <path d="M20 14c1 5-3 8-6 8 4 4 11 2 11-4 0-2-2-4-5-4z" fill="#fff" stroke="#1b2442" strokeWidth="1.200" />
          </Ico>
        </button>
        <span className="mr-[6px] h-full w-px bg-[#7d8494]" />
      </div>
    </footer>
  );
}

export default function App() {
  return (
    <div className="flex h-screen flex-col overflow-hidden bg-[#f0f0f0] font-['Segoe_UI','Open_Sans',sans-serif]">
      <TitleBar />
      <MenuRow />
      <Ribbon />
      <div className="flex min-h-0 grow">
        <NavPane />
        <span className="w-[7px] shrink-0 bg-[#cfcfcf]" />
        <FormArea />
      </div>
      <StatusBar />
      <Taskbar />
    </div>
  );
}
